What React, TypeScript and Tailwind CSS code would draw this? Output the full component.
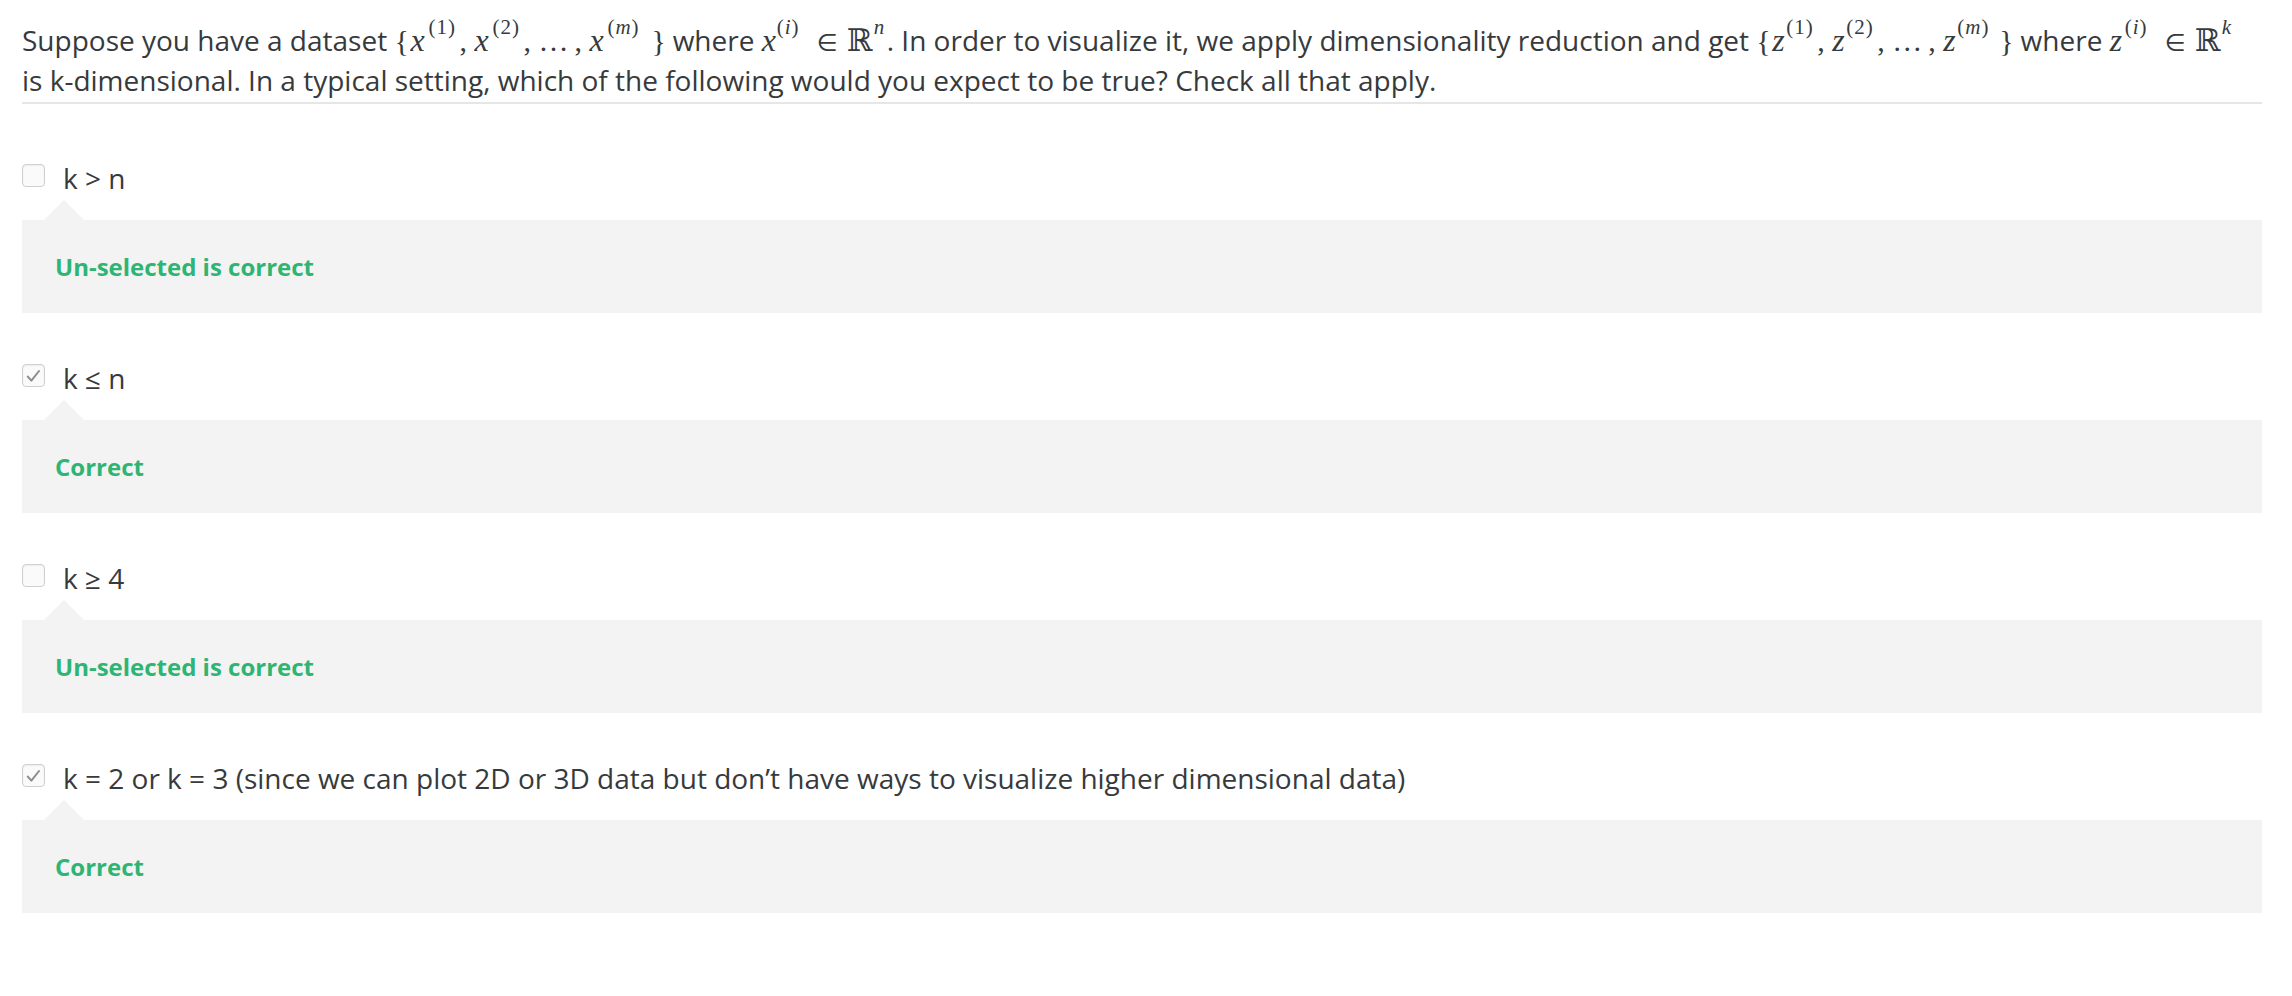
import React from "react";

const serif = "font-['Liberation_Serif','Times_New_Roman',serif]";

function Brace({ c, w }: { c: string; w: string }) {
  return <span className={`${serif} inline-block leading-none text-[30px] ${w}`}>{c}</span>;
}
function Comma({ w }: { w: string }) {
  return <span className={`${serif} inline-block leading-none text-[30px] ${w}`}>,</span>;
}
function Var({ c, w }: { c: string; w: string }) {
  return <span className={`${serif} inline-block leading-none italic text-[32px] ${w}`}>{c}</span>;
}
function Sup({ children, w }: { children: React.ReactNode; w: string }) {
  return (
    <span className={`${serif} inline-block leading-none relative -top-[17px] text-[21px] tracking-[1px] ${w}`}>
      {children}
    </span>
  );
}

function SeqX() {
  return (
    <span className="whitespace-nowrap">
      <Brace c="{" w="w-[16px]" />
      <Var c="x" w="w-[18px]" />
      <Sup w="w-[31px]">(1)</Sup>
      <Comma w="w-[15px]" />
      <Var c="x" w="w-[18px]" />
      <Sup w="w-[31px]">(2)</Sup>
      <Comma w="w-[15px]" />
      <span className={`${serif} inline-block leading-none text-[30px] w-[36px]`}>…</span>
      <Comma w="w-[15px]" />
      <Var c="x" w="w-[18px]" />
      <Sup w="w-[44px]">
        (<span className="italic">m</span>)
      </Sup>
      <Brace c="}" w="w-[14px]" />
    </span>
  );
}

function SeqZ() {
  return (
    <span className="whitespace-nowrap">
      <Brace c="{" w="w-[16px]" />
      <Var c="z" w="w-[14px]" />
      <Sup w="w-[31px]">(1)</Sup>
      <Comma w="w-[15px]" />
      <Var c="z" w="w-[14px]" />
      <Sup w="w-[31px]">(2)</Sup>
      <Comma w="w-[15px]" />
      <span className={`${serif} inline-block leading-none text-[30px] w-[36px]`}>…</span>
      <Comma w="w-[15px]" />
      <Var c="z" w="w-[14px]" />
      <Sup w="w-[42px]">
        (<span className="italic">m</span>)
      </Sup>
      <Brace c="}" w="w-[14px]" />
    </span>
  );
}

function Member({ v, dim }: { v: string; dim: string }) {
  return (
    <span className="whitespace-nowrap">
      <Var c={v} w="w-[15px]" />
      <Sup w="w-[40px]">
        (<span className="italic">i</span>)
      </Sup>
      <span className="inline-block leading-none font-['DejaVu_Sans',sans-serif] text-[24px] w-[30px]">∈</span>
      <span className="inline-block leading-none font-['DejaVu_Serif','DejaVu_Sans',serif] text-[31px] w-[27px]">ℝ</span>
      <Sup w="w-[13px]">
        <span className="italic">{dim}</span>
      </Sup>
    </span>
  );
}

function Check() {
  return (
    <svg width="15" height="14" viewBox="0 0 15 14" fill="none">
      <path d="M1.8 7.6 L5.4 11.6 L13 2" stroke="#8c8c8c" strokeWidth="2" strokeLinecap="round" strokeLinejoin="round" />
    </svg>
  );
}

function Option({
  label,
  checked,
  feedback,
  first,
}: {
  label: string;
  checked: boolean;
  feedback: string;
  first?: boolean;
}) {
  return (
    <div className={first ? "mt-[56px]" : "mt-[47px]"}>
      <div className="flex items-center h-[36px]">
        <div className="w-[23px] h-[23px] rounded-[4px] border border-[#cfcfcf] bg-[#fafafa] shadow-[inset_0_1px_2px_rgba(0,0,0,0.06)] flex items-center justify-center shrink-0 -mt-[5px]">
          {checked && <Check />}
        </div>
        <span className="ml-[18px] text-[28px] leading-[36px] text-[#373a3c] whitespace-nowrap">{label}</span>
      </div>
      <div className="mt-[4px] ml-[22px] w-0 h-0 border-l-[20px] border-r-[20px] border-b-[20px] border-l-transparent border-r-transparent border-b-[#f3f3f3]" />
      <div className="h-[93px] bg-[#f3f3f3] flex items-center pl-[33px]">
        <span className="text-[24px] font-bold text-[#2eb573] leading-none">{feedback}</span>
      </div>
    </div>
  );
}

export default function App() {
  return (
    <div className="min-h-screen bg-white font-['Open_Sans','Noto_Sans',sans-serif] text-[#373a3c] px-[22px] pt-[20px]">
      <div className="w-[2240px]">
        <div className="text-[28px] leading-[40px] pb-[2px] border-b-2 border-[#e6e6e6]">
          Suppose you have a dataset <SeqX /> where <Member v="x" dim="n" />. In order to visualize it, we apply
          dimensionality reduction and get <SeqZ /> where <Member v="z" dim="k" /> is k-dimensional. In a typical
          setting, which of the following would you expect to be true? Check all that apply.
        </div>
        <Option first label="k > n" checked={false} feedback="Un-selected is correct" />
        <Option label="k ≤ n" checked={true} feedback="Correct" />
        <Option label="k ≥ 4" checked={false} feedback="Un-selected is correct" />
        <Option
          label="k = 2 or k = 3 (since we can plot 2D or 3D data but don’t have ways to visualize higher dimensional data)"
          checked={true}
          feedback="Correct"
        />
      </div>
    </div>
  );
}
